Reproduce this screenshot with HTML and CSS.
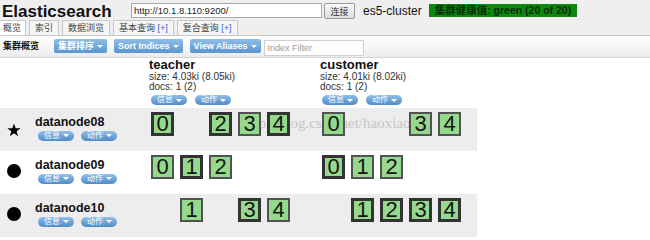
FILE: index.html
```html
<!DOCTYPE html>
<html lang="zh">
<head>
    <meta charset="utf-8">
    <title>Elasticsearch Head</title>
    <link rel="stylesheet" href="styles.css">
</head>
<body>
    <div class="masthead">
        <div class="masthead-row">
            <h1>Elasticsearch</h1>
            <input class="url" type="text" value="http://10.1.8.110:9200/">
            <button class="connect">连接</button>
            <span class="cluster-name">es5-cluster</span>
            <span class="health">集群健康值: green (20 of 20)</span>
        </div>
        <div class="tabs">
            <span class="tab active">概览</span>
            <span class="tab">索引</span>
            <span class="tab">数据浏览</span>
            <span class="tab">基本查询 <em>[+]</em></span>
            <span class="tab">复合查询 <em>[+]</em></span>
        </div>
    </div>

    <div class="toolbar">
        <span class="toolbar-title">集群概览</span>
        <button class="tool-btn first">集群排序</button>
        <button class="tool-btn">Sort Indices</button>
        <button class="tool-btn">View Aliases</button>
        <input class="filter" type="text" placeholder="Index Filter">
    </div>

    <table class="cluster">
        <thead>
            <tr>
                <th class="node-col"></th>
                <th class="index-col">
                    <div class="index-name">teacher</div>
                    <div class="index-meta">size: 4.03ki (8.05ki)</div>
                    <div class="index-meta">docs: 1 (2)</div>
                    <div class="pills"><span class="pill">信息</span><span class="pill">动作</span></div>
                </th>
                <th class="index-col last">
                    <div class="index-name">customer</div>
                    <div class="index-meta">size: 4.01ki (8.02ki)</div>
                    <div class="index-meta">docs: 1 (2)</div>
                    <div class="pills"><span class="pill">信息</span><span class="pill">动作</span></div>
                </th>
            </tr>
        </thead>
        <tbody>
            <tr class="shaded">
                <td>
                    <div class="node">
                        <svg class="icon star" width="14" height="14" viewBox="0 0 14 14"><path d="M7 0.5 L8.65 5.23 L13.66 5.34 L9.66 8.37 L11.11 13.16 L7 10.3 L2.89 13.16 L4.34 8.37 L0.34 5.34 L5.35 5.23 Z" fill="#000"/></svg>
                        <div>
                            <div class="node-name">datanode08</div>
                            <div class="pills"><span class="pill">信息</span><span class="pill">动作</span></div>
                        </div>
                    </div>
                </td>
                <td class="shard-cell">
                    <div class="shards">
                        <span class="shard primary">0</span>
                        <span class="shard empty"></span>
                        <span class="shard primary">2</span>
                        <span class="shard">3</span>
                        <span class="shard primary">4</span>
                    </div>
                </td>
                <td class="shard-cell">
                    <div class="shards">
                        <span class="shard">0</span>
                        <span class="shard empty"></span>
                        <span class="shard empty"></span>
                        <span class="shard">3</span>
                        <span class="shard">4</span>
                    </div>
                </td>
            </tr>
            <tr>
                <td>
                    <div class="node">
                        <svg class="icon" width="14" height="14" viewBox="0 0 14 14"><circle cx="7" cy="7" r="7" fill="#000"/></svg>
                        <div>
                            <div class="node-name">datanode09</div>
                            <div class="pills"><span class="pill">信息</span><span class="pill">动作</span></div>
                        </div>
                    </div>
                </td>
                <td class="shard-cell">
                    <div class="shards">
                        <span class="shard">0</span>
                        <span class="shard primary">1</span>
                        <span class="shard">2</span>
                    </div>
                </td>
                <td class="shard-cell">
                    <div class="shards">
                        <span class="shard primary">0</span>
                        <span class="shard">1</span>
                        <span class="shard">2</span>
                    </div>
                </td>
            </tr>
            <tr class="shaded">
                <td>
                    <div class="node">
                        <svg class="icon" width="14" height="14" viewBox="0 0 14 14"><circle cx="7" cy="7" r="7" fill="#000"/></svg>
                        <div>
                            <div class="node-name">datanode10</div>
                            <div class="pills"><span class="pill">信息</span><span class="pill">动作</span></div>
                        </div>
                    </div>
                </td>
                <td class="shard-cell">
                    <div class="shards">
                        <span class="shard empty"></span>
                        <span class="shard">1</span>
                        <span class="shard empty"></span>
                        <span class="shard primary">3</span>
                        <span class="shard">4</span>
                    </div>
                </td>
                <td class="shard-cell">
                    <div class="shards">
                        <span class="shard empty"></span>
                        <span class="shard primary">1</span>
                        <span class="shard primary">2</span>
                        <span class="shard primary">3</span>
                        <span class="shard primary">4</span>
                    </div>
                </td>
            </tr>
        </tbody>
    </table>

    <div class="watermark">http://blog.csdn.net/haoxiaoyan</div>
</body>
</html>
```

FILE: styles.css
```css
/* --- BASE --- */
body {
    margin: 0;
    font-family: "Liberation Sans", "Noto Sans CJK SC", sans-serif;
    font-size: 10px;
    color: #222;
    background: #fff;
}

/* --- MASTHEAD --- */
.masthead { background: #efefef; border-bottom: 1px solid #c8c8c8; }
.masthead-row { display: flex; align-items: flex-start; height: 17px; padding: 3px 0 0 2px; }
.masthead h1 { margin: 0; width: 129px; font-size: 17px; line-height: 17px; font-weight: bold; color: #111; }
.url { width: 191px; height: 15px; box-sizing: border-box; border: 1px solid #a8a8a8; padding: 0 2px; font-family: inherit; font-size: 9.5px; color: #222; background: #fff; }
.connect { margin-left: 2px; width: 31px; height: 16px; padding: 0; border: 1px solid #9a9a9a; border-radius: 2px; background: linear-gradient(#fafafa, #dcdcdc); font-family: inherit; font-size: 9px; color: #333; }
.cluster-name { margin-left: 8px; font-size: 12px; line-height: 16px; color: #111; }
.health { margin: 1px 0 0 7px; height: 13px; padding: 0 6px; background: #0c880c; color: #0b2b0b; font-size: 10.5px; font-weight: bold; line-height: 13px; }

.tabs { display: flex; gap: 3px; height: 15px; }
.tab { height: 15px; box-sizing: border-box; padding: 0 5px; border: 1px solid #c8c8c8; border-bottom: none; background: #f5f5f5; font-size: 9px; line-height: 14px; color: #444; }
.tab.active { padding: 0 4px 0 3px; border-left: none; background: #fff; }
.tab em { font-style: normal; color: #3a5fcd; }

/* --- TOOLBAR --- */
.toolbar { display: flex; align-items: flex-start; height: 22px; box-sizing: border-box; padding: 3px 0 0 3px; background: linear-gradient(#ffffff, #ececec); border-bottom: 1px solid #d6d6d6; }
.toolbar-title { font-size: 9px; font-weight: bold; line-height: 14px; color: #111; }
.tool-btn { display: inline-flex; align-items: center; margin-left: 7px; height: 14px; padding: 0 4px; border: none; border-radius: 2px; background: linear-gradient(#8fbde8, #5a96d0); color: #fff; font-family: inherit; font-size: 9px; font-weight: bold; line-height: 14px; }
.tool-btn.first { margin-left: 15px; }
.tool-btn::after, .pill::after { content: ''; margin-left: 3px; border-left: 3px solid transparent; border-right: 3px solid transparent; border-top: 3px solid #fff; }
.filter { margin: 1px 0 0 3px; width: 100px; height: 16px; box-sizing: border-box; border: 1px solid #cfcfcf; padding: 0 3px; font-family: inherit; font-size: 9px; background: #fff; }
.filter::placeholder { color: #999; }

/* --- CLUSTER TABLE --- */
.cluster { border-collapse: collapse; border-spacing: 0; }
.cluster th { height: 50px; padding: 0; text-align: left; vertical-align: top; font-weight: normal; }
.node-col { width: 149px; }
.index-col { width: 171px; }
.index-col.last { width: 157px; }
.index-name { font-size: 13px; font-weight: bold; line-height: 14px; color: #111; }
.index-meta { font-size: 10px; line-height: 10px; color: #333; }
th .pills { margin: 3px 0 0 2px; gap: 8px; }

.cluster td { height: 39px; padding: 0; vertical-align: top; }
.cluster tr.shaded td { background: #ededed; }
.node { display: flex; align-items: center; height: 39px; padding-left: 7px; }
.icon { flex: none; margin-right: 14px; }
.icon.star { margin-top: 5px; }
.node-name { font-size: 12.5px; font-weight: bold; line-height: 14px; color: #111; }
.node .pills { margin: 2px 0 0 3px; }

.pills { display: flex; gap: 7px; }
.pill { display: inline-flex; align-items: center; height: 10px; padding: 0 5px 0 6px; border-radius: 5px; background: linear-gradient(#92c0ea, #4f8bc8); color: #fff; font-size: 8px; line-height: 10px; }

.shard-cell { padding: 4px 0 0 2px !important; }
.shards { display: flex; gap: 6px; }
.shard { position: relative; z-index: 1; display: flex; align-items: center; justify-content: center; width: 23px; height: 24px; box-sizing: border-box; border: 2px solid #525252; background: #95d98c; font-size: 22px; line-height: 1; color: #151515; }
.shard.primary { border: 3px solid #333; }
.shard.empty { visibility: hidden; }

/* faint blog watermark sitting behind the shards */
.watermark { position: absolute; left: 243px; top: 115px; z-index: 0; font-family: "Liberation Serif", serif; font-size: 15px; color: #c6c6c6; }
```
